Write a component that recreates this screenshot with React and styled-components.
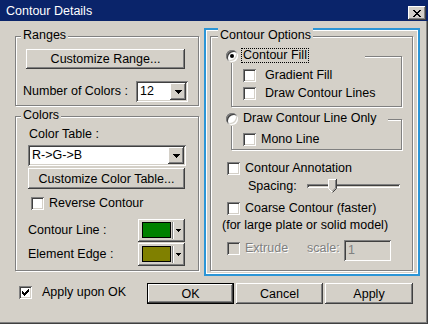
import React from "react";
import styled, { createGlobalStyle, css } from "styled-components";

const FACE = "#d4d0c8";
const LIGHT = "#ffffff";
const SHADOW = "#808080";
const DARK = "#404040";

const raised = css`
  box-shadow: inset -1px -1px 0 ${DARK}, inset 1px 1px 0 ${LIGHT},
    inset -2px -2px 0 ${SHADOW}, inset 2px 2px 0 ${FACE};
`;
const sunken = css`
  box-shadow: inset 1px 1px 0 ${SHADOW}, inset -1px -1px 0 ${LIGHT},
    inset 2px 2px 0 ${DARK}, inset -2px -2px 0 ${FACE};
`;

const GlobalStyle = createGlobalStyle`
  html, body { margin: 0; padding: 0; background: ${FACE}; }
  body {
    font-family: "Liberation Sans", Arial, sans-serif;
    font-size: 12.5px;
    color: #000;
  }
  * { box-sizing: border-box; }
`;

const Window = styled.div`
  width: 428px;
  height: 324px;
  display: flex;
  flex-direction: column;
  background: ${FACE};
  overflow: hidden;
`;

const TitleBar = styled.header`
  height: 21px;
  flex: none;
  display: flex;
  align-items: flex-start;
  justify-content: space-between;
  padding: 0 2px 0 6px;
  background: #0a246a;
  color: #fff;
`;

const Title = styled.span`
  margin-top: 4px;
  line-height: 15px;
  white-space: nowrap;
`;

const CloseButton = styled.div`
  width: 18px;
  height: 14px;
  margin-top: 6px;
  display: flex;
  align-items: center;
  justify-content: center;
  background: ${FACE};
  ${raised};
`;

const Body = styled.main`
  flex: 1;
  display: flex;
  flex-direction: column;
  padding: 7px 7px 0 15px;
  border-right: 1px solid ${DARK};
  border-bottom: 1px solid ${DARK};
  box-shadow: inset -1px -1px 0 ${SHADOW};
`;

const TopSection = styled.div`
  display: flex;
  align-items: flex-start;
  gap: 5px;
`;

const LeftColumn = styled.div`
  width: 184px;
  margin-top: 8px;
  display: flex;
  flex-direction: column;
  gap: 10px;
`;

const FocusPanel = styled.div`
  width: 216px;
  display: flex;
  padding: 6px 5px 3px 4px;
  border: 2px solid #2b95d6;
  box-shadow: inset 0 0 0 1px ${LIGHT};
`;

const GroupBox = styled.section`
  position: relative;
  flex: none;
  display: flex;
  flex-direction: column;
  width: ${(p) => (p.$w ? `${p.$w}px` : "auto")};
  margin: ${(p) => p.$m || 0};
  padding: ${(p) => p.$pad || 0};
  border: 1px solid ${SHADOW};
  box-shadow: inset 1px 1px 0 ${LIGHT}, 1px 1px 0 ${LIGHT};
`;

const Legend = styled.span`
  position: absolute;
  top: -9px;
  left: ${(p) => p.$left}px;
  padding: 0 2px;
  line-height: 15px;
  background: ${FACE};
  white-space: nowrap;
`;

const RadioLegend = styled.div`
  position: absolute;
  top: -9px;
  left: -6px;
  width: ${(p) => p.$w}px;
  height: 15px;
  display: flex;
  align-items: center;
  background: ${FACE};
`;

const RadioDot = styled.span`
  position: relative;
  flex: none;
  width: 12px;
  height: 12px;
  border-radius: 50%;
  background: ${LIGHT};
  ${sunken};
  ${(p) =>
    p.$checked &&
    css`
      &::after {
        content: "";
        position: absolute;
        left: 4px;
        top: 4px;
        width: 4px;
        height: 4px;
        border-radius: 50%;
        background: #000;
      }
    `}
`;

const RadioText = styled.span`
  margin-left: 3px;
  padding: 0 1px;
  line-height: 13px;
  white-space: nowrap;
  border: 1px dotted ${(p) => (p.$focus ? "#000" : "transparent")};
`;

const Row = styled.div`
  flex: none;
  display: flex;
  align-items: ${(p) => p.$align || "center"};
  height: ${(p) => p.$h}px;
  width: ${(p) => (p.$w ? `${p.$w}px` : "auto")};
  margin: ${(p) => p.$mt || 0}px ${(p) => p.$mr || 0}px 0 ${(p) => p.$ml || 0}px;
  gap: ${(p) => p.$gap || 0}px;
`;

const Label = styled.span`
  line-height: 15px;
  white-space: nowrap;
  color: ${(p) => (p.$disabled ? SHADOW : "#000")};
  text-shadow: ${(p) => (p.$disabled ? `1px 1px 0 ${LIGHT}` : "none")};
`;

const PushButton = styled.button`
  flex: none;
  width: ${(p) => p.$w}px;
  height: ${(p) => p.$h || 21}px;
  margin: ${(p) => p.$m || 0};
  padding: 0;
  border: ${(p) => (p.$default ? "1px solid #000" : "none")};
  font: inherit;
  color: #000;
  background: ${FACE};
  white-space: nowrap;
  ${raised};
`;

const CheckBox = styled.span`
  flex: none;
  display: inline-flex;
  width: 13px;
  height: 13px;
  background: ${(p) => (p.$disabled ? FACE : LIGHT)};
  ${sunken};
`;

const Combo = styled.div`
  flex: none;
  display: flex;
  align-items: center;
  width: ${(p) => p.$w}px;
  height: 21px;
  margin: ${(p) => p.$m || 0};
  padding: 2px;
  background: ${LIGHT};
  ${sunken};
`;

const ComboText = styled.span`
  flex: 1;
  padding-left: 2px;
  line-height: 15px;
  white-space: nowrap;
`;

const DropButton = styled.span`
  flex: none;
  width: 16px;
  height: 17px;
  display: flex;
  align-items: center;
  justify-content: center;
  background: ${FACE};
  ${raised};
`;

const ColorButton = styled.div`
  flex: none;
  display: flex;
  align-items: flex-start;
  width: 47px;
  height: 23px;
  margin-left: auto;
  padding: 3px 3px 3px 4px;
  background: ${FACE};
  ${raised};
`;

const Swatch = styled.span`
  flex: none;
  width: 29px;
  height: 16px;
  border: 1px solid #000;
  background: ${(p) => p.$color};
`;

const Separator = styled.span`
  flex: none;
  width: 2px;
  height: 17px;
  margin: 0 2px 0 1px;
  border-left: 1px solid ${SHADOW};
  border-right: 1px solid ${LIGHT};
`;

const SmallArrow = styled.svg`
  align-self: center;
  flex: none;
`;

const Slider = styled.div`
  position: relative;
  flex: none;
  width: 93px;
  height: 14px;
  margin-left: auto;
  display: flex;
  align-items: center;
`;

const Track = styled.div`
  width: 100%;
  height: 4px;
  ${sunken};
`;

const Thumb = styled.svg`
  position: absolute;
  top: 0;
  left: ${(p) => p.$pos}px;
`;

const TextField = styled.div`
  flex: none;
  width: 47px;
  height: 21px;
  padding: 2px 4px;
  line-height: 17px;
  color: ${SHADOW};
  background: ${FACE};
  ${sunken};
`;

const BottomBar = styled.div`
  flex: none;
  display: flex;
  align-items: flex-start;
  height: 21px;
  margin: 7px 7px 0 4px;
`;

const ButtonGroup = styled.div`
  display: flex;
  gap: 2px;
  margin-left: auto;
`;

function CheckMark() {
  return (
    <svg width="13" height="13" viewBox="0 0 13 13">
      <path
        d="M3 5h1v1h1v1h1V6h1V5h1V4h1V3h1v3H9v1H8v1H7v1H6v1H5V9H4V8H3z"
        fill="#000"
      />
    </svg>
  );
}

function DownArrow() {
  return (
    <svg width="7" height="4" viewBox="0 0 7 4">
      <path d="M0 0h7v1H0zM1 1h5v1H1zM2 2h3v1H2zM3 3h1v1H3z" fill="#000" />
    </svg>
  );
}

function Check({ checked, disabled, gap = 5, label, ...rowProps }) {
  return (
    <Row $h={13} $gap={gap} {...rowProps}>
      <CheckBox $disabled={disabled}>{checked && <CheckMark />}</CheckBox>
      <Label $disabled={disabled}>{label}</Label>
    </Row>
  );
}

function ColorPicker({ color }) {
  return (
    <ColorButton>
      <Swatch $color={color} />
      <Separator />
      <SmallArrow width="5" height="3" viewBox="0 0 5 3">
        <path d="M0 0h5v1H0zM1 1h3v1H1zM2 2h1v1H2z" fill="#000" />
      </SmallArrow>
    </ColorButton>
  );
}

export default function App() {
  return (
    <>
      <GlobalStyle />
      <Window>
        <TitleBar>
          <Title>Contour Details</Title>
          <CloseButton>
            <svg width="8" height="7" viewBox="0 0 8 7">
              <path
                d="M0 0h2v1H0zM6 0h2v1H6zM1 1h2v1H1zM5 1h2v1H5zM2 2h4v1H2zM3 3h2v1H3zM2 4h4v1H2zM1 5h2v1H1zM5 5h2v1H5zM0 6h2v1H0zM6 6h2v1H6z"
                fill="#000"
              />
            </svg>
          </CloseButton>
        </TitleBar>

        <Body>
          <TopSection>
            <LeftColumn>
              <GroupBox $pad="12px 0 3px 0">
                <Legend $left={5}>Ranges</Legend>
                <PushButton $w={159} $h={20} $m="0 0 0 10px">
                  Customize Range...
                </PushButton>
                <Row $h={21} $mt={12} $ml={7} $mr={10}>
                  <Label>Number of Colors :</Label>
                  <Combo $w={52} $m="0 0 0 auto">
                    <ComboText>12</ComboText>
                    <DropButton>
                      <DownArrow />
                    </DropButton>
                  </Combo>
                </Row>
              </GroupBox>

              <GroupBox $pad="10px 0 4px 0">
                <Legend $left={5}>Colors</Legend>
                <Row $h={15} $ml={13}>
                  <Label>Color Table :</Label>
                </Row>
                <Combo $w={158} $m="3px 0 0 12px">
                  <ComboText>R-&gt;G-&gt;B</ComboText>
                  <DropButton>
                    <DownArrow />
                  </DropButton>
                </Combo>
                <PushButton $w={157} $m="2px 0 0 12px">
                  Customize Color Table...
                </PushButton>
                <Check $mt={8} $ml={15} label="Reverse Contour" />
                <Row $h={23} $mt={9} $ml={12} $mr={13}>
                  <Label>Contour Line :</Label>
                  <ColorPicker color="#008000" />
                </Row>
                <Row $h={23} $mt={1} $ml={12} $mr={13}>
                  <Label>Element Edge :</Label>
                  <ColorPicker color="#808000" />
                </Row>
              </GroupBox>
            </LeftColumn>

            <FocusPanel>
              <GroupBox $w={203} $pad="0 0 9px 0">
                <Legend $left={7}>Contour Options</Legend>

                <GroupBox $w={171} $m="19px 0 0 20px" $pad="12px 0 6px 11px">
                  <RadioLegend $w={139}>
                    <RadioDot $checked />
                    <RadioText $focus>Contour Fill</RadioText>
                  </RadioLegend>
                  <Check gap={9} label="Gradient Fill" />
                  <Check gap={9} $mt={5} label="Draw Contour Lines" />
                </GroupBox>

                <GroupBox $w={171} $m="12px 0 0 20px" $pad="13px 0 3px 11px">
                  <RadioLegend $w={162}>
                    <RadioDot />
                    <RadioText>Draw Contour Line Only</RadioText>
                  </RadioLegend>
                  <Check label="Mono Line" />
                </GroupBox>

                <Check $mt={12} $ml={16} label="Contour Annotation" />
                <Row $h={14} $mt={4} $ml={37} $mr={12}>
                  <Label>Spacing:</Label>
                  <Slider>
                    <Track />
                    <Thumb $pos={21} width="9" height="14" viewBox="0 0 9 14">
                      <path d="M0 0H9V9.5L4.5 14L0 9.5Z" fill={FACE} />
                      <path d="M0.5 9.5V0.5H8" stroke={LIGHT} fill="none" />
                      <path d="M0.5 9.5L4.5 13.5" stroke={LIGHT} fill="none" />
                      <path d="M8.5 0V9.5L4.5 13.5" stroke={DARK} fill="none" />
                      <path d="M7.5 1V9L4.5 12" stroke={SHADOW} fill="none" />
                    </Thumb>
                  </Slider>
                </Row>
                <Check $mt={9} $ml={16} label="Coarse Contour (faster)" />
                <Row $h={15} $mt={3} $ml={11}>
                  <Label>(for large plate or solid model)</Label>
                </Row>
                <Row $h={21} $mt={7} $ml={16} $align="flex-start">
                  <Row $h={17} $w={80}>
                    <Check disabled label="Extrude" />
                  </Row>
                  <Row $h={17} $w={37}>
                    <Label $disabled>scale:</Label>
                  </Row>
                  <TextField>1</TextField>
                </Row>
              </GroupBox>
            </FocusPanel>
          </TopSection>

          <BottomBar>
            <Check checked gap={10} $mt={3} label="Apply upon OK" />
            <ButtonGroup>
              <PushButton $w={87} $default>
                OK
              </PushButton>
              <PushButton $w={87}>Cancel</PushButton>
              <PushButton $w={88}>Apply</PushButton>
            </ButtonGroup>
          </BottomBar>
        </Body>
      </Window>
    </>
  );
}
